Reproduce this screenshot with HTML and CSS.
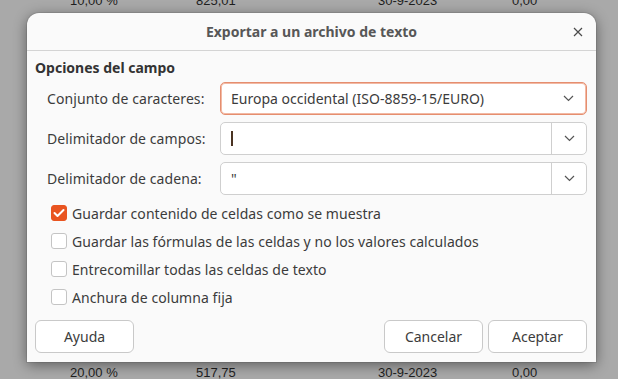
FILE: index.html
```html
<!DOCTYPE html>
<html lang="es">
<head>
<meta charset="utf-8">
<title>Exportar a un archivo de texto</title>
<link rel="stylesheet" href="styles.css">
</head>
<body>
<div class="sheet">
  <div class="sheet-top">
    <div class="sheet-row"><span>10,00 %</span><span>825,01</span><span>30-9-2023</span><span>0,00</span></div>
    <div class="sheet-row"><span>10,00 %</span><span>825,01</span><span>30-9-2023</span><span>0,00</span></div>
  </div>
  <div class="sheet-row sheet-bottom"><span>20,00 %</span><span>517,75</span><span>30-9-2023</span><span>0,00</span></div>
</div>

<div class="dialog">
  <div class="header">
    <span class="title">Exportar a un archivo de texto</span>
    <span class="close">
      <svg width="10" height="10" viewBox="0 0 10 10"><path d="M1 1 L9 9 M9 1 L1 9" stroke="#4a4a4a" stroke-width="1.2" fill="none"/></svg>
    </span>
  </div>
  <div class="body">
    <div class="section-title">Opciones del campo</div>
    <div class="fields">
      <label class="field-label">Conjunto de caracteres:</label>
      <div class="combo focused">
        <span class="combo-text">Europa occidental (ISO-8859-15/EURO)</span>
        <span class="chev"><svg width="11" height="7" viewBox="0 0 11 7"><path d="M1 1 L5.5 5.5 L10 1" stroke="#555" stroke-width="1.2" fill="none"/></svg></span>
      </div>
      <label class="field-label">Delimitador de campos:</label>
      <div class="combo">
        <span class="combo-text"><span class="caret"></span></span>
        <span class="chev split"><svg width="11" height="7" viewBox="0 0 11 7"><path d="M1 1 L5.5 5.5 L10 1" stroke="#555" stroke-width="1.2" fill="none"/></svg></span>
      </div>
      <label class="field-label">Delimitador de cadena:</label>
      <div class="combo">
        <span class="combo-text">"</span>
        <span class="chev split"><svg width="11" height="7" viewBox="0 0 11 7"><path d="M1 1 L5.5 5.5 L10 1" stroke="#555" stroke-width="1.2" fill="none"/></svg></span>
      </div>
    </div>
    <div class="checks">
      <div class="check-row"><span class="box checked"><svg width="12" height="10" viewBox="0 0 12 10"><path d="M1.5 5 L4.5 8 L10.5 2" stroke="#fff" stroke-width="2" fill="none" stroke-linecap="round" stroke-linejoin="round"/></svg></span><span>Guardar contenido de celdas como se muestra</span></div>
      <div class="check-row"><span class="box"></span><span>Guardar las fórmulas de las celdas y no los valores calculados</span></div>
      <div class="check-row"><span class="box"></span><span>Entrecomillar todas las celdas de texto</span></div>
      <div class="check-row"><span class="box"></span><span>Anchura de columna fija</span></div>
    </div>
    <div class="buttons">
      <button class="btn">Ayuda</button>
      <span class="spacer"></span>
      <button class="btn">Cancelar</button>
      <button class="btn">Aceptar</button>
    </div>
  </div>
</div>
</body>
</html>
```

FILE: styles.css
```css
html, body {
  margin: 0;
  padding: 0;
}
body {
  width: 618px;
  height: 379px;
  overflow: hidden;
  position: relative;
  background: #a9a9a9;
  font-family: "Noto Sans", "DejaVu Sans", sans-serif;
}
.sheet {
  height: 379px;
  display: flex;
  flex-direction: column;
  justify-content: space-between;
  font-family: "Liberation Sans", Arial, sans-serif;
  font-size: 13px;
  color: #1f1f1f;
}
.sheet-top {
  margin-top: -8px;
  height: 21px;
  overflow: hidden;
}
.sheet-row {
  display: grid;
  grid-template-columns: 126px 182px 134px auto;
  padding-left: 70px;
  height: 18px;
  line-height: 18px;
}
.sheet-bottom {
  margin-bottom: -3px;
}
.dialog {
  position: absolute;
  left: 27px;
  top: 13px;
  width: 569px;
  height: 349px;
  background: #fafafa;
  border-radius: 12px 12px 0 0;
  box-shadow: 0 3px 14px rgba(0,0,0,0.45), 0 0 0 1px rgba(0,0,0,0.08);
  display: flex;
  flex-direction: column;
  color: #3c3c3c;
}
.header {
  height: 37px;
  border-bottom: 1px solid #d4d4d4;
  display: flex;
  align-items: center;
  justify-content: center;
  position: relative;
}
.title {
  font-weight: bold;
  font-size: 14px;
  color: #575757;
}
.close {
  position: absolute;
  right: 13px;
  top: 14px;
  width: 10px;
  height: 10px;
  display: flex;
}
.body {
  flex: 1;
  display: flex;
  flex-direction: column;
  padding: 7px 9px 9px 8px;
  font-size: 14px;
}
.section-title {
  font-weight: bold;
  line-height: 20px;
  color: #333;
}
.fields {
  margin-top: 4px;
  display: grid;
  grid-template-columns: 185px 1fr;
  row-gap: 7px;
  align-items: center;
}
.field-label {
  padding-left: 12px;
  letter-spacing: 0.08px;
}
.combo {
  height: 33px;
  box-sizing: border-box;
  border: 1px solid #cfcfcf;
  border-radius: 5px;
  background: #fff;
  display: flex;
  align-items: center;
}
.combo.focused {
  border: 1px solid #e58e6f;
  box-shadow: inset 0 0 0 1px #f2b9a4;
}
.combo-text {
  flex: 1;
  padding-left: 10px;
  display: flex;
  align-items: center;
}
.caret {
  width: 2px;
  height: 15px;
  background: #4a3322;
}
.chev {
  width: 35px;
  height: 100%;
  display: flex;
  align-items: center;
  justify-content: center;
  box-sizing: border-box;
}
.chev.split {
  border-left: 1px solid #cfcfcf;
}
.checks {
  margin-top: 4px;
  padding-left: 16px;
}
.check-row {
  height: 28px;
  display: flex;
  align-items: center;
  gap: 5px;
  letter-spacing: 0.06px;
}
.box {
  width: 16px;
  height: 16px;
  box-sizing: border-box;
  border: 1px solid #c4c4c4;
  border-radius: 3px;
  background: #fff;
  display: flex;
  align-items: center;
  justify-content: center;
}
.box.checked {
  background: #e95420;
  border-color: #e95420;
}
.buttons {
  margin-top: auto;
  display: flex;
  gap: 5px;
}
.spacer {
  flex: 1;
}
.btn {
  width: 99px;
  height: 33px;
  border: 1px solid #c9c9c9;
  border-radius: 6px;
  background: #fff;
  font-family: inherit;
  font-size: 14px;
  color: #3c3c3c;
  padding: 0;
}
```
